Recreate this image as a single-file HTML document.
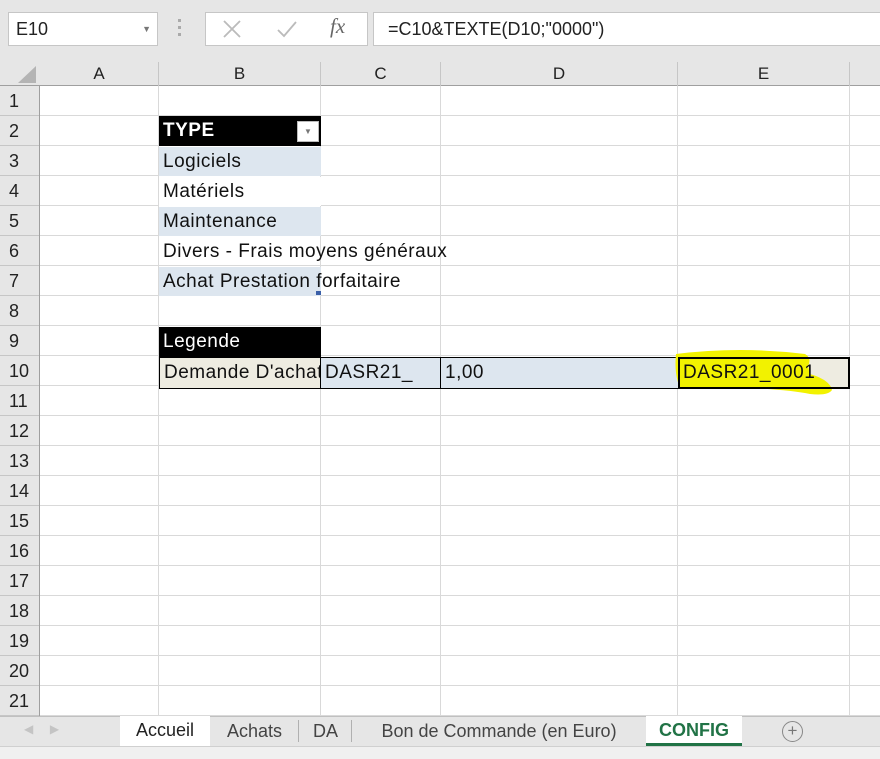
<!DOCTYPE html>
<html><head><meta charset="utf-8"><style>
*{margin:0;padding:0;box-sizing:border-box}
body{width:880px;height:759px;overflow:hidden;background:#e6e6e6;font-family:"Liberation Sans",Arial,sans-serif;position:relative}
.a{position:absolute}
.box{background:#fff;border:1px solid #c6c6c6}
.hdr{color:#222;font-size:17px;text-align:center}
.cell{position:absolute;font-size:19px;letter-spacing:0.5px;color:#111;line-height:30px;padding-left:4px;white-space:nowrap;overflow:hidden}
</style></head><body>
<div class="a box" style="left:8px;top:12px;width:150px;height:34px;font-size:18px;line-height:32px;padding-left:7px;color:#222">E10<span class="a" style="right:6px;top:0;font-size:9px;color:#777">▼</span></div>
<div class="a" style="left:178px;top:19px;width:3px;height:20px;background:repeating-linear-gradient(#aaa 0 3px,transparent 3px 7px)"></div>
<div class="a box" style="left:205px;top:12px;width:163px;height:34px"></div>
<svg class="a" style="left:222px;top:19px" width="20" height="20"><path d="M2 2L18 18M18 2L2 18" stroke="#bbb" stroke-width="1.8"/></svg>
<svg class="a" style="left:276px;top:19px" width="22" height="20"><path d="M2 11L8 17L20 3" stroke="#bbb" stroke-width="1.8" fill="none"/></svg>
<div class="a" style="left:330px;top:14px;font-family:'Liberation Serif',serif;font-style:italic;font-size:21px;color:#666">fx</div>
<div class="a box" style="left:373px;top:12px;width:520px;height:34px;font-size:18px;line-height:32px;padding-left:14px;color:#222">=C10&amp;TEXTE(D10;"0000")</div>
<div class="a" style="left:0;top:62px;width:880px;height:654px;background:#fff"></div>
<div class="a" style="left:0;top:62px;width:880px;height:24px;background:#e6e6e6;border-bottom:1px solid #9f9f9f"></div>
<div class="a" style="left:0;top:86px;width:40px;height:630px;background:#e6e6e6;border-right:1px solid #9f9f9f"></div>
<svg class="a" style="left:18px;top:66px" width="18" height="17"><path d="M18 0L18 17L0 17Z" fill="#b4b4b4"/></svg>
<div id="g"></div>
<div class="cell" style="left:159px;top:116px;width:162px;height:30px;background:#000;color:#fff;font-weight:bold">TYPE</div>
<div class="a" style="left:297px;top:121px;width:22px;height:21px;background:#fff;border:1px solid #bbb;font-size:8px;color:#777;text-align:center;line-height:19px">▼</div>
<div class="cell" style="left:159px;top:147px;width:162px;height:29px;background:#dde6ef">Logiciels</div>
<div class="cell" style="left:159px;top:177px;width:162px;height:29px;background:#fff">Matériels</div>
<div class="cell" style="left:159px;top:207px;width:162px;height:29px;background:#dde6ef">Maintenance</div>
<div class="cell" style="left:159px;top:237px;width:400px;height:29px">Divers - Frais moyens généraux</div>
<div class="a" style="left:159px;top:267px;width:162px;height:29px;background:#dde6ef"></div>
<div class="cell" style="left:159px;top:267px;width:400px;height:29px">Achat Prestation forfaitaire</div>
<div class="a" style="left:316px;top:291px;width:5px;height:4px;background:#3a5fa8"></div>
<div class="cell" style="left:159px;top:327px;width:162px;height:30px;background:#000;color:#fff">Legende</div>
<div class="a" style="left:159px;top:357px;width:691px;height:32px;border:1px solid #000;background:#dde6ef"></div>
<div class="cell" style="left:160px;top:358px;width:161px;height:30px;background:#eeece1;border-right:1px solid #000">Demande D'achat</div>
<div class="cell" style="left:321px;top:358px;width:120px;height:30px;border-right:1px solid #000">DASR21_</div>
<div class="cell" style="left:441px;top:358px;width:237px;height:30px">1,00</div>
<div class="a" style="left:678px;top:357px;width:172px;height:32px;background:#eeece1"></div>
<svg class="a" style="left:670px;top:344px" width="170" height="56"><path d="M6 10Q70 2 135 10Q142 14 138 22L140 30Q160 36 162 46Q158 52 140 50Q120 46 80 44L10 44Q4 30 6 10Z" fill="#f2f200"/></svg>
<div class="cell" style="left:678px;top:357px;width:172px;height:32px;border:2px solid #000;line-height:28px;padding-left:3px">DASR21_0001</div>
<div class="a" style="left:0;top:716px;width:880px;height:30px;background:#e6e6e6;border-top:1px solid #c0c0c0"></div>
<div class="a" style="left:24px;top:722px;color:#c4c4c4;font-size:12px">◀&nbsp;&nbsp;&nbsp;&nbsp;&nbsp;▶</div>
<div class="a" style="left:120px;top:716px;width:90px;height:30px;background:#fff;font-size:18px;text-align:center;line-height:29px;color:#222">Accueil</div>
<div class="a" style="left:211px;top:720px;width:88px;height:22px;border-right:1px solid #b0b0b0;font-size:18px;text-align:center;line-height:22px;color:#444">Achats</div>
<div class="a" style="left:300px;top:720px;width:52px;height:22px;border-right:1px solid #b0b0b0;font-size:18px;text-align:center;line-height:22px;color:#444">DA</div>
<div class="a" style="left:353px;top:720px;width:292px;height:22px;font-size:18px;text-align:center;line-height:22px;color:#444">Bon de Commande (en Euro)</div>
<div class="a" style="left:646px;top:716px;width:96px;height:30px;background:#fff;border-bottom:3px solid #217346;font-size:18px;font-weight:bold;text-align:center;line-height:28px;color:#217346">CONFIG</div>
<div class="a" style="left:782px;top:721px;width:21px;height:21px;border:1px solid #888;border-radius:50%;font-size:17px;text-align:center;line-height:18px;color:#777">+</div>
<div class="a" style="left:0;top:746px;width:880px;height:13px;background:#f0f0f0;border-top:1px solid #d0d0d0"></div>
<script>
var g=document.getElementById('g'),h='';
var cols=[40,159,321,441,678,850],names=['A','B','C','D','E'];
for(var i=0;i<5;i++)h+='<div class="a hdr" style="left:'+cols[i]+'px;top:62px;width:'+(cols[i+1]-cols[i])+'px;height:24px;line-height:24px;border-right:1px solid #c6c6c6">'+names[i]+'</div>';
for(var i=1;i<cols.length;i++)h+='<div class="a" style="left:'+(cols[i]-1)+'px;top:86px;width:1px;height:630px;background:#d9d9d9"></div>';
for(var r=0;r<21;r++){var y=86+r*30;
h+='<div class="a" style="left:40px;top:'+(y+29)+'px;width:840px;height:1px;background:#d9d9d9"></div>';
h+='<div class="a hdr" style="left:0;top:'+y+'px;width:39px;height:30px;line-height:30px;border-bottom:1px solid #c6c6c6;text-align:left;padding-left:9px;font-size:18px">'+(r+1)+'</div>';}
g.innerHTML=h;
</script>
</body></html>
